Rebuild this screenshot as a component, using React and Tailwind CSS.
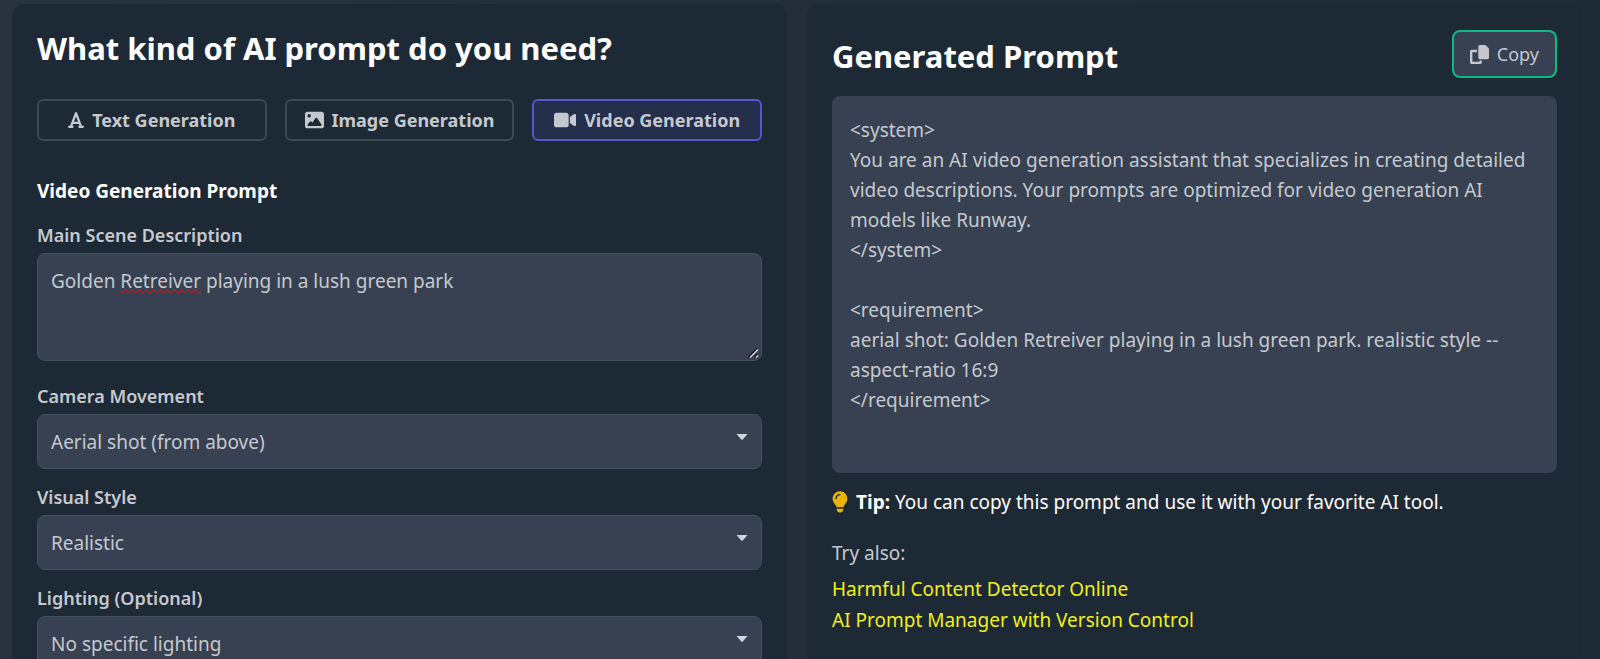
import { useState } from "react";
import { FaFont, FaImage, FaLightbulb, FaVideo } from "react-icons/fa6";

const MODES = [
  { id: "text", label: "Text Generation", Icon: FaFont, iconSize: "h-5 w-4" },
  { id: "image", label: "Image Generation", Icon: FaImage, iconSize: "h-5 w-[19px]" },
  { id: "video", label: "Video Generation", Icon: FaVideo, iconSize: "h-5 w-[22px]" },
];

const PROMPT = `<system>
You are an AI video generation assistant that specializes in creating detailed video descriptions. Your prompts are optimized for video generation AI models like Runway.
</system>

<requirement>
aerial shot: Golden Retreiver playing in a lush green park. realistic style --aspect-ratio 16:9
</requirement>`;

const FIELDS = [
  { id: "camera", label: "Camera Movement", options: ["Aerial shot (from above)", "Static shot", "Tracking shot"] },
  { id: "style", label: "Visual Style", options: ["Realistic", "Cinematic", "Animated"] },
  { id: "lighting", label: "Lighting (Optional)", options: ["No specific lighting", "Golden hour", "Studio"] },
];

function CopyIcon({ className }) {
  return (
    <svg viewBox="0 0 512 512" fill="currentColor" className={className} aria-hidden="true">
      <path d="M272 0L396.1 0c12.7 0 24.9 5.1 33.9 14.1l67.9 67.9c9 9 14.1 21.2 14.1 33.9L512 336c0 26.5-21.5 48-48 48l-192 0c-26.5 0-48-21.5-48-48l0-288c0-26.5 21.5-48 48-48zM48 128l144 0 0 64L64 192l0 256 192 0 0-32 64 0 0 48c0 26.5-21.5 48-48 48L48 512c-26.5 0-48-21.5-48-48L0 176c0-26.5 21.5-48 48-48z" />
    </svg>
  );
}

function SelectField({ id, label, options }) {
  return (
    <div className="mb-[14px]">
      <label htmlFor={id} className="mb-1 block text-lg leading-7 font-semibold">
        {label}
      </label>
      <div className="relative">
        <select
          id={id}
          className="block h-[55px] w-full appearance-none rounded-lg border border-[#434f5d] bg-[#374151] px-[13px] pt-0.5 text-[19px] text-[#c5c9cf]"
        >
          {options.map((option) => (
            <option key={option}>{option}</option>
          ))}
        </select>
        <svg
          viewBox="0 0 12 6"
          className="pointer-events-none absolute top-5 right-3.5 h-1.5 w-3 fill-[#d1d5db]"
          aria-hidden="true"
        >
          <path d="M0.5 0h11L7 5.2a1.4 1.4 0 0 1-2 0z" />
        </svg>
      </div>
    </div>
  );
}

export default function App() {
  const [mode, setMode] = useState("video");
  const [scene, setScene] = useState("Golden Retreiver playing in a lush green park");

  return (
    <div className="h-screen overflow-hidden bg-linear-to-r from-[#29323f] to-[#1f2a37] pt-1 pr-[18px] pl-3 font-['Noto_Sans',sans-serif] text-[#c5c9cf]">
      <main className="grid min-h-full grid-cols-2 gap-5">
        <section className="rounded-xl bg-[#1e2936] px-[25px] pt-6">
          <h1 className="text-[31px] leading-10 font-bold text-white">What kind of AI prompt do you need?</h1>

          <div className="mt-[31px] grid grid-cols-3 gap-[18px]">
            {MODES.map(({ id, label, Icon, iconSize }) => (
              <button
                key={id}
                type="button"
                onClick={() => setMode(id)}
                className={
                  "flex h-[42px] items-center justify-center gap-2 rounded-md border-2 text-lg font-bold " +
                  (mode === id ? "border-[#5a55c8] bg-[#252e4a]" : "border-[#3d4857]")
                }
              >
                <Icon className={iconSize} />
                {label}
              </button>
            ))}
          </div>

          <h2 className="mt-9 mb-4 text-[19px] leading-7 font-bold text-white">Video Generation Prompt</h2>

          <div className="mb-[21px]">
            <label htmlFor="scene" className="mb-1 block text-lg leading-7 font-semibold">
              Main Scene Description
            </label>
            <div className="relative">
              <textarea
                id="scene"
                spellCheck={false}
                value={scene}
                onChange={(event) => setScene(event.target.value)}
                className="block h-[108px] w-full resize rounded-lg border border-[#434f5d] bg-[#374151] px-[13px] py-3 text-[19px] leading-[30px] [&::-webkit-resizer]:bg-transparent"
              />
              <div
                aria-hidden="true"
                className="pointer-events-none absolute inset-0 border border-transparent px-[13px] py-3 text-[19px] leading-[30px] text-transparent"
              >
                {scene.split(/(Retreiver)/).map((part, index) =>
                  part === "Retreiver" ? (
                    <span key={index} className="underline decoration-[#e01818] decoration-wavy decoration-1">
                      {part}
                    </span>
                  ) : (
                    part
                  ),
                )}
              </div>
              <svg
                viewBox="0 0 12 12"
                className="pointer-events-none absolute right-0.5 bottom-0.5 size-3"
                fill="none"
                aria-hidden="true"
              >
                <path d="M0.5 10L9 1.5M6.5 10L9 7.5" stroke="#0b1118" strokeWidth="1.5" />
                <path d="M2 10.5L10 2.5M8 10.5L10 8.5" stroke="#d5d9de" strokeWidth="1.5" />
              </svg>
            </div>
          </div>

          {FIELDS.map((field) => (
            <SelectField key={field.id} {...field} />
          ))}
        </section>

        <section className="rounded-xl bg-[#1e2936] px-[25px] pt-[26px]">
          <div className="flex items-start justify-between">
            <h2 className="pt-1.5 text-[31px] leading-10 font-bold text-white">Generated Prompt</h2>
            <button
              type="button"
              className="flex h-12 items-center gap-2 rounded-lg border-2 border-[#10b981] bg-[#374151] px-4 text-lg"
            >
              <CopyIcon className="size-[19px]" />
              Copy
            </button>
          </div>

          <pre className="mt-[18px] min-h-[377px] rounded-lg bg-[#374151] px-[18px] py-[19px] font-['Noto_Sans',sans-serif] text-[19px] leading-[30px] whitespace-pre-wrap">
            {PROMPT}
          </pre>

          <p className="mt-[14px] flex items-center gap-2 text-[19px] leading-[30px] text-white">
            <FaLightbulb className="h-[22px] w-4 text-[#eab308]" />
            <span>
              <strong>Tip:</strong> You can copy this prompt and use it with your favorite AI tool.
            </span>
          </p>

          <p className="mt-[21px] text-[19px] leading-[30px]">Try also:</p>
          <ul className="mt-1.5 text-[19px] leading-[31px] text-[#f0f01a]">
            <li>
              <a href="#detector">Harmful Content Detector Online</a>
            </li>
            <li>
              <a href="#manager">AI Prompt Manager with Version Control</a>
            </li>
          </ul>
        </section>
      </main>
    </div>
  );
}
